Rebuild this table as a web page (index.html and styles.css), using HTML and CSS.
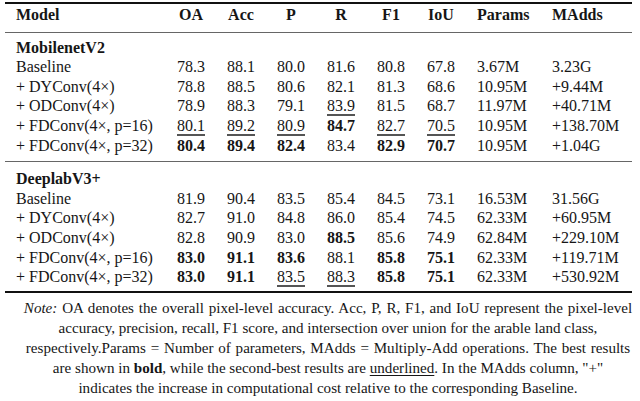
FILE: index.html
```html
<!DOCTYPE html>
<html lang="en">
<head>
<meta charset="utf-8">
<title>Results table</title>
<link rel="stylesheet" href="styles.css">
</head>
<body>
<table class="results">
  <colgroup>
    <col class="c-model">
    <col class="c-num"><col class="c-num"><col class="c-num">
    <col class="c-num"><col class="c-num"><col class="c-num">
    <col class="c-params">
    <col class="c-madds">
  </colgroup>
  <thead>
    <tr class="head">
      <th class="model">Model</th>
      <th>OA</th><th>Acc</th><th>P</th><th>R</th><th>F1</th><th>IoU</th>
      <th class="left">Params</th><th class="left">MAdds</th>
    </tr>
  </thead>
  <tbody class="group g1">
    <tr class="title"><td class="model" colspan="9"><b>MobilenetV2</b></td></tr>
    <tr><td class="model">Baseline</td><td>78.3</td><td>88.1</td><td>80.0</td><td>81.6</td><td>80.8</td><td>67.8</td><td class="left">3.67M</td><td class="left">3.23G</td></tr>
    <tr><td class="model">+ DYConv(4×)</td><td>78.8</td><td>88.5</td><td>80.6</td><td>82.1</td><td>81.3</td><td>68.6</td><td class="left">10.95M</td><td class="left">+9.44M</td></tr>
    <tr><td class="model">+ ODConv(4×)</td><td>78.9</td><td>88.3</td><td>79.1</td><td><u>83.9</u></td><td>81.5</td><td>68.7</td><td class="left">11.97M</td><td class="left">+40.71M</td></tr>
    <tr><td class="model">+ FDConv(4×, p=16)</td><td><u>80.1</u></td><td><u>89.2</u></td><td><u>80.9</u></td><td><b>84.7</b></td><td><u>82.7</u></td><td><u>70.5</u></td><td class="left">10.95M</td><td class="left">+138.70M</td></tr>
    <tr class="last"><td class="model">+ FDConv(4×, p=32)</td><td><b>80.4</b></td><td><b>89.4</b></td><td><b>82.4</b></td><td>83.4</td><td><b>82.9</b></td><td><b>70.7</b></td><td class="left">10.95M</td><td class="left">+1.04G</td></tr>
  </tbody>
  <tbody class="group g2">
    <tr class="title"><td class="model" colspan="9"><b>DeeplabV3+</b></td></tr>
    <tr><td class="model">Baseline</td><td>81.9</td><td>90.4</td><td>83.5</td><td>85.4</td><td>84.5</td><td>73.1</td><td class="left">16.53M</td><td class="left">31.56G</td></tr>
    <tr><td class="model">+ DYConv(4×)</td><td>82.7</td><td>91.0</td><td>84.8</td><td>86.0</td><td>85.4</td><td>74.5</td><td class="left">62.33M</td><td class="left">+60.95M</td></tr>
    <tr><td class="model">+ ODConv(4×)</td><td>82.8</td><td>90.9</td><td>83.0</td><td><b>88.5</b></td><td>85.6</td><td>74.9</td><td class="left">62.84M</td><td class="left">+229.10M</td></tr>
    <tr><td class="model">+ FDConv(4×, p=16)</td><td><b>83.0</b></td><td><b>91.1</b></td><td><b>83.6</b></td><td>88.1</td><td><b>85.8</b></td><td><b>75.1</b></td><td class="left">62.33M</td><td class="left">+119.71M</td></tr>
    <tr class="last"><td class="model">+ FDConv(4×, p=32)</td><td><b>83.0</b></td><td><b>91.1</b></td><td><u>83.5</u></td><td><u>88.3</u></td><td><b>85.8</b></td><td><b>75.1</b></td><td class="left">62.33M</td><td class="left">+530.92M</td></tr>
  </tbody>
</table>
<p class="note"><span class="line wide"><i>Note:</i> OA denotes the overall pixel-level accuracy. Acc, P, R, F1, and IoU represent the pixel-level</span><span class="line">accuracy, precision, recall, F1 score, and intersection over union for the arable land class,</span><span class="line wide">respectively.Params = Number of parameters, MAdds = Multiply-Add operations. The best results</span><span class="line">are shown in <b>bold</b>, while the second-best results are <u>underlined</u>. In the MAdds column, "+"</span><span class="line">indicates the increase in computational cost relative to the corresponding Baseline.</span></p>
</body>
</html>
```

FILE: styles.css
```css
html, body {
  margin: 0;
  padding: 0;
  background: #ffffff;
}
body {
  font-family: "Liberation Serif", "Times New Roman", serif;
  font-size: 16px;
  color: #161616;
}
.results {
  margin: 2px 0 0 5px;
  width: 627px;
  table-layout: fixed;
  border-collapse: collapse;
  border-top: 2px solid #111;
  border-bottom: 2px solid #111;
}
.c-model { width: 161px; }
.c-num { width: 50px; }
.c-params { width: 75px; }
.c-madds { width: 91px; }
.results th,
.results td {
  padding: 0;
  line-height: 19.6px;
  text-align: center;
  white-space: nowrap;
  font-weight: normal;
}
.results th { font-weight: bold; }
.results .model { text-align: left; padding-left: 11px; }
.results .left { text-align: left; padding-left: 11px; }
.head th { padding-top: 1px; padding-bottom: 7px; }
thead { border-bottom: 1px solid #666; }
.g2 { border-top: 1px solid #666; }
.g1 .title td { padding-top: 5px; }
.g1 .last td { padding-bottom: 6px; }
.g2 .title td { padding-top: 7px; }
.g2 .last td { padding-bottom: 4px; }
.results u {
  text-decoration: underline;
  text-decoration-thickness: 1.5px;
  text-underline-offset: 3px;
  text-decoration-color: #555;
}
.note {
  margin: 5px 0 0 16px;
  width: 624px;
  font-size: 15.1px;
  text-align: center;
  line-height: 20px;
  white-space: nowrap;
}
.note .line { display: block; }
.note .wide { word-spacing: 1px; }
.note u {
  text-underline-offset: 2px;
}
```
